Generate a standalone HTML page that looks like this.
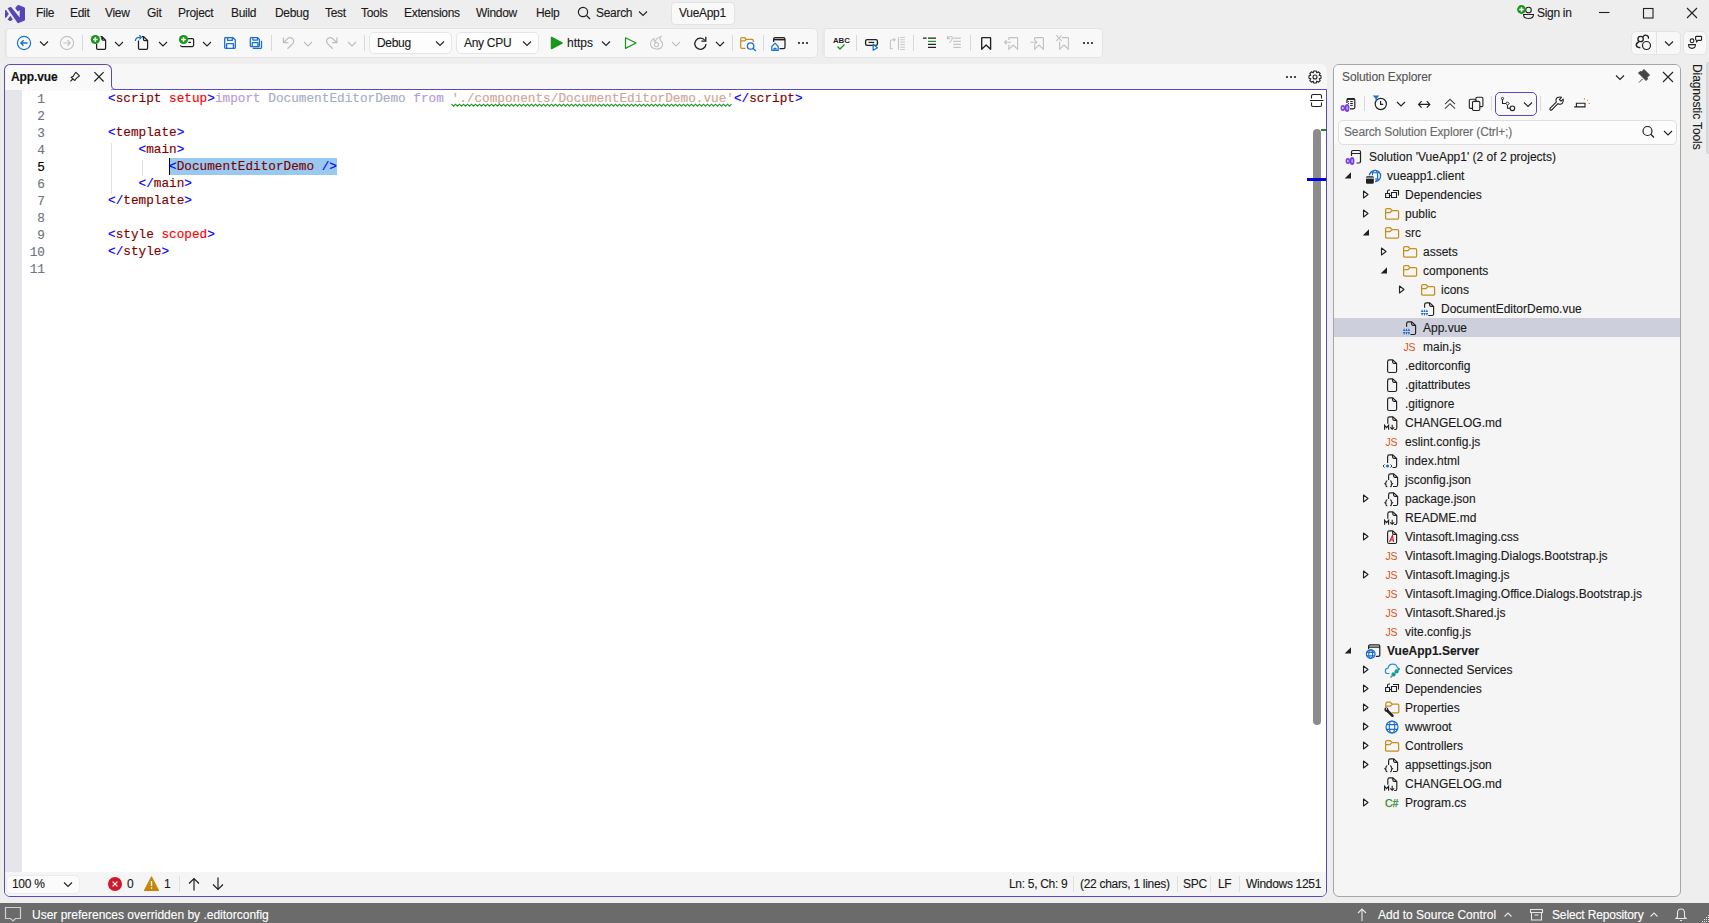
<!DOCTYPE html>
<html><head><meta charset="utf-8">
<style>
*{box-sizing:border-box;margin:0;padding:0}
html,body{width:1709px;height:923px;overflow:hidden;background:#eeeeee;font-family:"Liberation Sans",sans-serif;font-size:12px;color:#1a1a1a}
.a{position:absolute}
.t{position:absolute;white-space:nowrap;line-height:14px;letter-spacing:-0.3px;-webkit-text-stroke:0.12px}
.menu .t{top:6px}
.tb{position:absolute;background:#f8f8f8;border:1px solid #e4e4e4;border-radius:5px}
.cb{position:absolute;background:#fdfdfd;border:1px solid #e6e6e6;border-radius:5px}
.sep{position:absolute;width:1px;background:#d9d9d9}
svg{position:absolute;overflow:visible}
.code{position:absolute;left:108px;top:90px;font-family:"Liberation Mono",monospace;font-size:12.72px;line-height:17px;white-space:pre;color:#000;-webkit-text-stroke:0.15px}
.ln{position:absolute;left:22px;top:90.5px;width:23px;text-align:right;font-family:"Liberation Mono",monospace;font-size:12.72px;line-height:17px;color:#6e7681;white-space:pre;-webkit-text-stroke:0.15px}
.se .t{line-height:19px;letter-spacing:0;margin-top:1px}
.tag{color:#0000ff}.nm{color:#800000}.at{color:#ff0000}.i1{color:#b89ad6}.i2{color:#a4adc6}.i3{color:#d1a595}
</style></head><body>
<!-- title bar / menu -->
<div class="menu">
<div class="t" style="left:36px">File</div>
<div class="t" style="left:70px">Edit</div>
<div class="t" style="left:105px">View</div>
<div class="t" style="left:147px">Git</div>
<div class="t" style="left:178px">Project</div>
<div class="t" style="left:231px">Build</div>
<div class="t" style="left:275px">Debug</div>
<div class="t" style="left:325px">Test</div>
<div class="t" style="left:361px">Tools</div>
<div class="t" style="left:404px">Extensions</div>
<div class="t" style="left:476px">Window</div>
<div class="t" style="left:536px">Help</div>
<div class="t" style="left:596px">Search</div>
<div class="a" style="left:671px;top:2px;width:64px;height:23px;background:#f9f9f9;border:1px solid #e2e2e2;border-radius:4px"></div>
<div class="t" style="left:679px">VueApp1</div>
<div class="t" style="left:1537px">Sign in</div>
</div>

<!-- toolbars -->
<div class="tb" style="left:4px;top:28px;width:814px;height:30px;border-left:3px solid #e8e8e8"></div>
<div class="tb" style="left:822px;top:28px;width:281px;height:30px;border-left:3px solid #e8e8e8"></div>
<div class="cb" style="left:369px;top:32px;width:83px;height:22px"></div>
<div class="cb" style="left:456px;top:32px;width:83px;height:22px"></div>
<div class="t" style="left:377px;top:36px">Debug</div>
<div class="t" style="left:464px;top:36px">Any CPU</div>
<div class="t" style="left:567px;top:36px;letter-spacing:0">https</div>
<div class="sep" style="left:82px;top:35px;height:16px"></div>
<div class="sep" style="left:271px;top:35px;height:16px"></div>
<div class="sep" style="left:364px;top:35px;height:16px"></div>
<div class="sep" style="left:732px;top:35px;height:16px"></div>
<div class="sep" style="left:763px;top:35px;height:16px"></div>
<div class="sep" style="left:856px;top:35px;height:16px"></div>
<div class="sep" style="left:913px;top:35px;height:16px"></div>
<div class="sep" style="left:970px;top:35px;height:16px"></div>
<div class="tb" style="left:1631px;top:31px;width:50px;height:24px"></div>
<div class="sep" style="left:1656px;top:32px;height:22px;background:#e4e4e4"></div>
<div class="tb" style="left:1683px;top:31px;width:24px;height:24px"></div>

<!-- document well -->
<div class="a" style="left:4px;top:64px;width:1323px;height:833px;background:#f7f7f7;border-radius:6px"></div>
<div class="a" style="left:4px;top:89px;width:1323px;height:808px;background:#fff;border:1px solid #574ab9;border-radius:0 0 6px 6px"></div>
<div class="a" style="left:4px;top:64px;width:108px;height:26px;background:#f9f9f9;border:1px solid #574ab9;border-bottom:none;border-radius:6px 6px 0 0"></div>
<div class="a" style="left:5px;top:89px;width:106px;height:2px;background:#f9f9f9"></div>
<div class="t" style="left:11px;top:70px;font-weight:bold;color:#111;letter-spacing:-0.1px">App.vue</div>
<div class="a" style="left:5px;top:90px;width:17px;height:782px;background:#e6e6ea"></div>
<div class="a" style="left:5px;top:872px;width:1321px;height:24px;background:#f5f5f5;border-radius:0 0 5px 5px"></div>
<div class="cb" style="left:6px;top:875px;width:74px;height:19px;background:#fbfbfb;border-color:#ececec"></div>
<div class="t" style="left:12px;top:877px">100 %</div>
<div class="t" style="left:127px;top:877px">0</div>
<div class="t" style="left:164px;top:877px">1</div>
<div class="sep" style="left:179px;top:876px;height:16px;background:#e0e0e0"></div>
<div class="t" style="left:1009px;top:877px">Ln: 5, Ch: 9</div>
<div class="sep" style="left:1073px;top:876px;height:16px;background:#e0e0e0"></div>
<div class="t" style="left:1080px;top:877px">(22 chars, 1 lines)</div>
<div class="sep" style="left:1177px;top:876px;height:16px;background:#e0e0e0"></div>
<div class="t" style="left:1183px;top:877px">SPC</div>
<div class="sep" style="left:1210px;top:876px;height:16px;background:#e0e0e0"></div>
<div class="t" style="left:1218px;top:877px">LF</div>
<div class="sep" style="left:1239px;top:876px;height:16px;background:#e0e0e0"></div>
<div class="t" style="left:1246px;top:877px">Windows 1251</div>

<!-- editor content -->
<div class="a" style="left:111px;top:143px;width:1px;height:51px;background:#e0e0e0"></div>
<div class="a" style="left:142px;top:160px;width:1px;height:16px;background:#e0e0e0"></div>
<div class="a" style="left:169px;top:158px;width:168px;height:17px;background:#99c9ef"></div>
<div class="a" style="left:169px;top:158px;width:1px;height:17px;background:#000"></div>
<div class="ln">1
2
3
4
<span style="color:#000">5</span>
6
7
8
9
10
11</div>
<div class="code"><span class="tag">&lt;</span><span class="nm">script</span> <span class="at">setup</span><span class="tag">&gt;</span><span class="i1">import</span> <span class="i2">DocumentEditorDemo</span> <span class="i1">from</span> <span class="i3">'./components/DocumentEditorDemo.vue'</span><span class="tag">&lt;/</span><span class="nm">script</span><span class="tag">&gt;</span>

<span class="tag">&lt;</span><span class="nm">template</span><span class="tag">&gt;</span>
    <span class="tag">&lt;</span><span class="nm">main</span><span class="tag">&gt;</span>
        <span class="tag">&lt;</span><span class="nm">DocumentEditorDemo</span> <span class="tag">/&gt;</span>
    <span class="tag">&lt;/</span><span class="nm">main</span><span class="tag">&gt;</span>
<span class="tag">&lt;/</span><span class="nm">template</span><span class="tag">&gt;</span>

<span class="tag">&lt;</span><span class="nm">style</span> <span class="at">scoped</span><span class="tag">&gt;</span>
<span class="tag">&lt;/</span><span class="nm">style</span><span class="tag">&gt;</span>
</div>
<!-- scrollbar -->
<div class="a" style="left:1313px;top:129px;width:8px;height:596px;background:#8c8c8c;border-radius:4px"></div>
<div class="a" style="left:1321px;top:129px;width:5px;height:2px;background:#1e8a1e"></div>
<div class="a" style="left:1307px;top:178px;width:19px;height:3px;background:#0000d8"></div>

<!-- Solution explorer -->
<div class="a" style="left:1333px;top:64px;width:348px;height:833px;background:#f5f5f5;border:1px solid #a6a6a6;border-radius:6px"></div>
<div class="a" style="left:1334px;top:65px;width:346px;height:79px;background:#f9f9f9;border-radius:5px 5px 0 0"></div>
<div class="t" style="left:1342px;top:70px;color:#555;letter-spacing:-0.1px">Solution Explorer</div>
<div class="cb" style="left:1338px;top:120px;width:339px;height:25px;background:#fcfcfc;border-color:#dfdfdf"></div>
<div class="t" style="left:1344px;top:125px;color:#6a6a6a;letter-spacing:-0.15px">Search Solution Explorer (Ctrl+;)</div>
<div class="a" style="left:1495px;top:92px;width:42px;height:24px;border:1.5px solid #574ab9;border-radius:5px;background:#f9f9f9"></div>
<div class="sep" style="left:1364px;top:96px;height:15px"></div>
<div class="sep" style="left:1491px;top:96px;height:15px"></div>
<div class="sep" style="left:1540px;top:96px;height:15px"></div>
<div class="a" style="left:1334px;top:318px;width:346px;height:19px;background:#cdcfdc"></div>
<div class="se">
<div class="t" style="left:1369px;top:147px">Solution 'VueApp1' (2 of 2 projects)</div>
<div class="t" style="left:1387px;top:166px">vueapp1.client</div>
<div class="t" style="left:1405px;top:185px">Dependencies</div>
<div class="t" style="left:1405px;top:204px">public</div>
<div class="t" style="left:1405px;top:223px">src</div>
<div class="t" style="left:1423px;top:242px">assets</div>
<div class="t" style="left:1423px;top:261px">components</div>
<div class="t" style="left:1441px;top:280px">icons</div>
<div class="t" style="left:1441px;top:299px">DocumentEditorDemo.vue</div>
<div class="t" style="left:1423px;top:318px">App.vue</div>
<div class="t" style="left:1423px;top:337px">main.js</div>
<div class="t" style="left:1405px;top:356px">.editorconfig</div>
<div class="t" style="left:1405px;top:375px">.gitattributes</div>
<div class="t" style="left:1405px;top:394px">.gitignore</div>
<div class="t" style="left:1405px;top:413px">CHANGELOG.md</div>
<div class="t" style="left:1405px;top:432px">eslint.config.js</div>
<div class="t" style="left:1405px;top:451px">index.html</div>
<div class="t" style="left:1405px;top:470px">jsconfig.json</div>
<div class="t" style="left:1405px;top:489px">package.json</div>
<div class="t" style="left:1405px;top:508px">README.md</div>
<div class="t" style="left:1405px;top:527px">Vintasoft.Imaging.css</div>
<div class="t" style="left:1405px;top:546px">Vintasoft.Imaging.Dialogs.Bootstrap.js</div>
<div class="t" style="left:1405px;top:565px">Vintasoft.Imaging.js</div>
<div class="t" style="left:1405px;top:584px">Vintasoft.Imaging.Office.Dialogs.Bootstrap.js</div>
<div class="t" style="left:1405px;top:603px">Vintasoft.Shared.js</div>
<div class="t" style="left:1405px;top:622px">vite.config.js</div>
<div class="t" style="left:1387px;top:641px;font-weight:bold">VueApp1.Server</div>
<div class="t" style="left:1405px;top:660px">Connected Services</div>
<div class="t" style="left:1405px;top:679px">Dependencies</div>
<div class="t" style="left:1405px;top:698px">Properties</div>
<div class="t" style="left:1405px;top:717px">wwwroot</div>
<div class="t" style="left:1405px;top:736px">Controllers</div>
<div class="t" style="left:1405px;top:755px">appsettings.json</div>
<div class="t" style="left:1405px;top:774px">CHANGELOG.md</div>
<div class="t" style="left:1405px;top:793px">Program.cs</div>
</div>

<!-- Diagnostic tools vertical tab -->
<div class="a" style="left:1706px;top:62px;width:3px;height:92px;background:#d8d8d8;border-radius:2px 0 0 2px"></div>
<div class="t" style="left:1689.5px;top:64px;transform-origin:0 0;transform:rotate(90deg) translate(0,-14px);color:#1a1a1a;letter-spacing:-0.1px">Diagnostic Tools</div>

<!-- status bar -->
<div class="a" style="left:0;top:903px;width:1709px;height:20px;background:#6b6b6b"></div>
<div class="t" style="left:32px;top:907.7px;color:#fff;letter-spacing:0">User preferences overridden by .editorconfig</div>
<div class="t" style="left:1378px;top:907.7px;color:#fff;letter-spacing:0">Add to Source Control</div>
<div class="t" style="left:1552px;top:907.7px;color:#fff;letter-spacing:-0.15px">Select Repository</div>

<svg width="1709" height="923" style="left:0;top:0" viewBox="0 0 1709 923"><path fill="#5647b6" d="M5,10.3 L5,17.6 Q5.6,18.4 6.3,17.6 L8.8,14 L6.3,10.2 Q5.6,9.6 5,10.3 Z M7.6,19.4 L10.4,15.8 L12.8,19.5 L10.8,20.9 Q10.3,21.1 9.8,20.9 Z M7.5,8.3 L10.3,7 Q10.9,6.8 11.3,7.3 L19.7,17.6 L19.7,10.2 L17.7,11.6 L15.1,8.1 L17.6,5.2 Q18.1,4.8 18.7,5 L24.2,7.3 Q25,7.8 25,8.6 L25,19.4 Q25,20.2 24.2,20.7 L18.6,23.1 Q17.9,23.3 17.4,22.7 Z"/>
<circle cx="583" cy="12" r="4.6" fill="none" stroke="#212121" stroke-width="1.2"/><path d="M586.4,15.4 L590,19" stroke="#212121" stroke-width="1.3"/>
<path d="M639,11.5 L643,15.5 L647,11.5" fill="none" stroke="#212121" stroke-width="1.1"/>
<circle cx="1528.5" cy="10" r="2.8" fill="none" stroke="#212121" stroke-width="1.1"/><path d="M1523.5,14.5 H1533.5 Q1533.5,18.5 1528.5,18.5 Q1523.5,18.5 1523.5,14.5 Z" fill="none" stroke="#212121" stroke-width="1.1"/>
<circle cx="1521.5" cy="9.5" r="4.4" fill="#1a961a"/>
<path d="M1519.2,9.5 H1523.8 M1521.5,7.2 V11.8" stroke="#fff" stroke-width="1.5"/>
<path d="M1599,12.5 H1609.5" stroke="#212121" stroke-width="1.1"/>
<rect x="1643.5" y="8.5" width="9.5" height="9.5" fill="none" stroke="#212121" stroke-width="1.1"/>
<path d="M1687,8 L1697,18 M1697,8 L1687,18" stroke="#212121" stroke-width="1.1"/>
<circle cx="24" cy="43" r="6.6" fill="none" stroke="#1b6fd1" stroke-width="1.2"/><path d="M27.6,43 H20.8 M23.6,40.2 L20.8,43 L23.6,45.8" fill="none" stroke="#1b6fd1" stroke-width="1.3"/>
<path d="M40,41.5 L44,45.5 L48,41.5" fill="none" stroke="#212121" stroke-width="1.1"/>
<circle cx="67" cy="43" r="6.6" fill="none" stroke="#c2c2c2" stroke-width="1.1"/><path d="M63.4,43 H70.2 M67.4,40.2 L70.2,43 L67.4,45.8" fill="none" stroke="#c2c2c2" stroke-width="1.2"/>
<path d="M96.6,44 V48.3 Q96.6,49.4 97.7,49.4 H104.5 Q105.6,49.4 105.6,48.3 V40.2 L102,36.6 H100.5 M101.9,36.8 V39 Q101.9,40.1 103,40.1 H105.4" fill="none" stroke="#212121" stroke-width="1.25" stroke-linejoin="round"/>
<circle cx="95.3" cy="39.5" r="4.6" fill="#1a961a"/>
<path d="M93.0,39.5 H97.6 M95.3,37.2 V41.8" stroke="#fff" stroke-width="1.5"/>
<path d="M115,42.0 L119,46.0 L123,42.0" fill="none" stroke="#212121" stroke-width="1.1"/>
<path d="M138.5,40.5 V48.3 Q138.5,49.4 139.6,49.4 H146.5 Q147.6,49.4 147.6,48.3 V40.5 L143.7,36.6 H142 M143.5,36.8 V39.4 Q143.5,40.5 144.6,40.5 H147.4" fill="none" stroke="#212121" stroke-width="1.25" stroke-linejoin="round"/><path d="M135.4,41 Q135.4,37.3 139.5,37.3 H141 M139.4,35.2 L141.4,37.3 L139.4,39.4" fill="none" stroke="#1b6fd1" stroke-width="1.2"/>
<path d="M159,42.0 L163,46.0 L167,42.0" fill="none" stroke="#212121" stroke-width="1.1"/>
<path d="M180.6,45.3 Q180.6,46.5 181.8,46.5 H192.4 Q193.6,46.5 193.6,45.3 V39.7 Q193.6,38.5 192.4,38.5 H188 M188.4,42.3 H191" fill="none" stroke="#212121" stroke-width="1.25"/>
<circle cx="183.5" cy="39.5" r="4.6" fill="#1a961a"/>
<path d="M181.2,39.5 H185.8 M183.5,37.2 V41.8" stroke="#fff" stroke-width="1.5"/>
<path d="M203,42.0 L207,46.0 L211,42.0" fill="none" stroke="#212121" stroke-width="1.1"/>
<path d="M225.4,37.7 H233 L235.3,40 V47.6 Q235.3,48.3 234.6,48.3 H225.4 Q224.7,48.3 224.7,47.6 V38.4 Q224.7,37.7 225.4,37.7 Z M227.6,37.8 V40.4 H232.3 V37.8 M226.6,48.2 V44.3 Q226.6,43.7 227.2,43.7 H232.8 Q233.4,43.7 233.4,44.3 V48.2" fill="none" stroke="#1b6fd1" stroke-width="1.3" stroke-linejoin="round"/>
<path d="M251,37.7 H257.6 L259.4,39.5 V45.8 Q259.4,46.5 258.7,46.5 H251 Q250.3,46.5 250.3,45.8 V38.4 Q250.3,37.7 251,37.7 Z M252.9,37.8 V40 H257.4 V37.8 M252.2,46.4 V43.1 Q252.2,42.5 252.8,42.5 H257.3 Q257.9,42.5 257.9,43.1 V46.4 M252.8,48.3 H260.6 Q261.5,48.3 261.5,47.4 V40.7" fill="none" stroke="#1b6fd1" stroke-width="1.25" stroke-linejoin="round"/>
<path d="M283.4,37.4 V42.6 H288.4 M283.9,42.2 L287.2,39 Q289.9,36.7 292.5,38.6 Q294.9,40.9 292.7,43.7 L287.5,48.7" fill="none" stroke="#bdbdbd" stroke-width="1.2"/>
<path d="M304,42.0 L308,46.0 L312,42.0" fill="none" stroke="#bdbdbd" stroke-width="1.1"/>
<path d="M 336.9,37.4 V 42.6 H 331.9 M 336.4,42.2 L 333.1,39.0 Q 330.4,36.7 327.8,38.6 Q 325.4,40.9 327.6,43.7 L 332.8,48.7" fill="none" stroke="#bdbdbd" stroke-width="1.2"/>
<path d="M348,42.0 L352,46.0 L356,42.0" fill="none" stroke="#bdbdbd" stroke-width="1.1"/>
<path d="M436,41.5 L440,45.5 L444,41.5" fill="none" stroke="#212121" stroke-width="1.1"/>
<path d="M523,41.5 L527,45.5 L531,41.5" fill="none" stroke="#212121" stroke-width="1.1"/>
<path d="M551.5,37.5 L562,43 L551.5,48.5 Z" fill="#1a961a" stroke="#1a961a" stroke-width="1.5" stroke-linejoin="round"/>
<path d="M602,41.5 L606,45.5 L610,41.5" fill="none" stroke="#212121" stroke-width="1.1"/>
<path d="M625.5,37.8 L636,43 L625.5,48.4 Z" fill="none" stroke="#1a961a" stroke-width="1.2" stroke-linejoin="round"/>
<path d="M656,49 Q650,48 650.5,43 Q651,40 654,38.5 Q653.5,41 655,42 Q656,38 661,36.5 Q659,39 661,41 Q664,44 661.5,47.5 Q659.5,49.5 656,49 Z M656.5,46.8 A2.2,2.2 0 1 0 656.5,42.4 A2.2,2.2 0 1 0 656.5,46.8" fill="none" stroke="#c2c2c2" stroke-width="1.1"/>
<path d="M672,42.0 L676,46.0 L680,42.0" fill="none" stroke="#c2c2c2" stroke-width="1.1"/>
<path d="M705,40.5 A5.6,5.6 0 1 0 706,44" fill="none" stroke="#212121" stroke-width="1.3"/><path d="M705.8,36.8 V41.2 H701.4" fill="none" stroke="#212121" stroke-width="1.3"/>
<path d="M716,42.0 L720,46.0 L724,42.0" fill="none" stroke="#212121" stroke-width="1.1"/>
<path d="M745.5,48.4 H742 Q740.7,48.4 740.7,47.1 V38.8 Q740.7,37.5 742,37.5 H744.6 L746.4,39.4 H752 Q753.3,39.4 753.3,40.7 V42 M740.7,40.9 H744.6 L746.4,39.4" fill="none" stroke="#c4901b" stroke-width="1.25" stroke-linejoin="round"/><circle cx="750.6" cy="46" r="3.2" fill="#f8f8f8" stroke="#1b6fd1" stroke-width="1.3"/><path d="M752.9,48.3 L755.8,51" stroke="#1b6fd1" stroke-width="1.4"/>
<path d="M773.6,42 V39.2 Q773.6,37.6 775.2,37.6 H783.4 Q785,37.6 785,39.2 V47 Q785,48.6 783.4,48.6 H779.5" fill="none" stroke="#212121" stroke-width="1.25"/><path d="M773.6,39.6 H785" stroke="#212121" stroke-width="1.6"/><path d="M771.8,50.4 V46.5 L775,43.2 L778.2,46.5 V50.4 Z M774,50.4 V48.4 H776 V50.4" fill="#f8f8f8" stroke="#1b6fd1" stroke-width="1.2" stroke-linejoin="round"/>
<circle cx="799" cy="43" r="1.1" fill="#212121"/>
<circle cx="803" cy="43" r="1.1" fill="#212121"/>
<circle cx="807" cy="43" r="1.1" fill="#212121"/>
<text x="841.4" y="42.6" text-anchor="middle" font-family="Liberation Sans" font-weight="bold" font-size="7.8" fill="#212121">ABC</text><path d="M837.5,46.5 L840,49 L844.5,44.5" fill="none" stroke="#1a961a" stroke-width="1.4"/>
<rect x="865.6" y="39.6" width="11.8" height="5.8" rx="1.6" fill="none" stroke="#212121" stroke-width="1.35"/><path d="M868.6,42.4 H874.2" stroke="#212121" stroke-width="1.2"/><path d="M873.2,44.2 V50.2 L877.4,47.8 Z" fill="#fff" stroke="#1b6fd1" stroke-width="1.3" stroke-linejoin="round"/>
<path d="M893,48.8 H890.4 V41.6 M890.4,41.6 Q890.4,39.8 892.6,39.8 H895 M893.6,38.2 L895.2,39.8 L893.6,41.4" fill="none" stroke="#c4c4c4" stroke-width="1.1"/><path d="M898.5,37.2 V49.8" stroke="#c4c4c4" stroke-width="1.1"/><path d="M900.2,37.4 H905 M900.2,39.8 H905 M900.2,42.2 H905 M900.2,44.7 H905 M900.2,47.2 H905 M900.2,49.6 H905" stroke="#c4c4c4" stroke-width="0.9"/>
<path d="M923,38.1 H926.6 M928,38.1 H936 M928,44.4 H936 M928,47.4 H936" stroke="#212121" stroke-width="1.2"/><path d="M928,41.4 H936" stroke="#1a961a" stroke-width="1.2"/>
<path d="M953.3,38.1 H960.8 M953.3,41.4 H960.8 M953.3,44.4 H960.8 M953.3,47.4 H960.8" stroke="#c4c4c4" stroke-width="1.1"/><path d="M947.4,35.8 V38.6 H950 M947.8,38.2 Q950,35.4 952,37 Q953,38.6 951,41 L949.4,43" fill="none" stroke="#c4c4c4" stroke-width="1.05"/>
<path d="M981.7,49.2 V38.2 Q981.7,37.6 982.3,37.6 H990 Q990.6,37.6 990.6,38.2 V49.2 L986.15,45 Z" fill="none" stroke="#212121" stroke-width="1.35" stroke-linejoin="round"/>
<path d="M1008.8,40 V38.2 Q1008.8,37.6 1009.4,37.6 H1017.0 Q1017.5999999999999,37.6 1017.5999999999999,38.2 V49.2 L1013.1999999999999,45 L1008.8,49.2 V44.6 M1004.5,42.2 H1011 M1006.6,40.1 L1004.5,42.2 L1006.6,44.3" fill="none" stroke="#c0c0c0" stroke-width="1.1"/>
<path d="M1034.6,40 V38.2 Q1034.6,37.6 1035.1999999999998,37.6 H1042.8 Q1043.3999999999999,37.6 1043.3999999999999,38.2 V49.2 L1039.0,45 L1034.6,49.2 V44.6 M1030.3,42.2 H1036.8 M1034.7,40.1 L1036.8,42.2 L1034.7,44.3" fill="none" stroke="#c0c0c0" stroke-width="1.1"/>
<path d="M1059.6,41.5 V49.2 L1064,45 L1068.4,49.2 V38.2 Q1068.4,37.6 1067.8,37.6 H1062 M1056.3,35.4 L1061.7,40.8 M1061.7,35.4 L1056.3,40.8" fill="none" stroke="#c0c0c0" stroke-width="1.1"/>
<circle cx="1084" cy="43" r="1.1" fill="#212121"/>
<circle cx="1088" cy="43" r="1.1" fill="#212121"/>
<circle cx="1092" cy="43" r="1.1" fill="#212121"/>
<circle cx="1640.6" cy="39" r="2.7" fill="none" stroke="#212121" stroke-width="1.3"/><path d="M1643.1,37 A2.7,2.7 0 0 1 1648.3,38.8" fill="none" stroke="#212121" stroke-width="1.2"/><path d="M1638.8,42 Q1636.3,42.8 1636.3,45.2 Q1636.5,47.3 1640.3,47.8" fill="none" stroke="#212121" stroke-width="1.5"/><circle cx="1646.5" cy="45.5" r="4" fill="#f8f8f8" stroke="#212121" stroke-width="1.2"/>
<path d="M1665,41.5 L1669,45.5 L1673,41.5" fill="none" stroke="#212121" stroke-width="1.1"/>
<circle cx="1692" cy="40.8" r="1.9" fill="none" stroke="#212121" stroke-width="1.1"/><path d="M1688.6,44.6 H1695.4 Q1695.6,48.4 1692,48.4 Q1688.4,48.4 1688.6,44.6 Z" fill="none" stroke="#212121" stroke-width="1.1"/><path d="M1696.4,36.4 H1700.8 Q1701.6,36.4 1701.6,37.2 V39.6 Q1701.6,40.4 1700.8,40.4 H1698.2 L1696.6,41.8 V40.2 Q1695.6,40 1695.6,39.4 V37.2 Q1695.6,36.4 1696.4,36.4 Z" fill="none" stroke="#212121" stroke-width="1.1"/>
<path d="M70.4,81.4 L72.8,79 M71.2,77.3 L73.3,76.2 L74.5,74 L75.9,72.3 L79.5,75.9 L77.7,77.2 L76.2,78.5 L74.9,80.5 Z" fill="none" stroke="#212121" stroke-width="1.1" stroke-linejoin="round"/>
<path d="M94.4,72.2 L103.6,81.5 M103.6,72.2 L94.4,81.5" stroke="#212121" stroke-width="1.2"/>
<circle cx="1287" cy="77" r="1.1" fill="#212121"/>
<circle cx="1291" cy="77" r="1.1" fill="#212121"/>
<circle cx="1295" cy="77" r="1.1" fill="#212121"/>
<rect x="111" y="83" width="8" height="6.4" fill="#f7f7f7"/><path d="M111.5,82 V85 Q111.5,89.5 116,89.5 H120" fill="none" stroke="#574ab9" stroke-width="1"/>
<g transform="translate(1315,77)"><path d="M-1.2,-6 H1.2 L1.8,-4.2 L3.5,-5.2 L5.2,-3.5 L4.2,-1.8 L6,-1.2 V1.2 L4.2,1.8 L5.2,3.5 L3.5,5.2 L1.8,4.2 L1.2,6 H-1.2 L-1.8,4.2 L-3.5,5.2 L-5.2,3.5 L-4.2,1.8 L-6,1.2 V-1.2 L-4.2,-1.8 L-5.2,-3.5 L-3.5,-5.2 L-1.8,-4.2 Z" fill="none" stroke="#212121" stroke-width="1.1" stroke-linejoin="round"/><circle r="2" fill="none" stroke="#212121" stroke-width="1.1"/></g>
<path d="M1311.5,98.5 V96 Q1311.5,94.5 1313,94.5 H1320 Q1321.5,94.5 1321.5,96 V98.5 M1311.5,102.5 V105 Q1311.5,106.5 1313,106.5 H1320 Q1321.5,106.5 1321.5,105 V102.5 M1310,100.5 H1323.5" fill="none" stroke="#212121" stroke-width="1.1"/>
<polyline points="451.5,104.2 453.5,106.2 455.5,104.2 457.5,106.2 459.5,104.2 461.5,106.2 463.5,104.2 465.5,106.2 467.5,104.2 469.5,106.2 471.5,104.2 473.5,106.2 475.5,104.2 477.5,106.2 479.5,104.2 481.5,106.2 483.5,104.2 485.5,106.2 487.5,104.2 489.5,106.2 491.5,104.2 493.5,106.2 495.5,104.2 497.5,106.2 499.5,104.2 501.5,106.2 503.5,104.2 505.5,106.2 507.5,104.2 509.5,106.2 511.5,104.2 513.5,106.2 515.5,104.2 517.5,106.2 519.5,104.2 521.5,106.2 523.5,104.2 525.5,106.2 527.5,104.2 529.5,106.2 531.5,104.2 533.5,106.2 535.5,104.2 537.5,106.2 539.5,104.2 541.5,106.2 543.5,104.2 545.5,106.2 547.5,104.2 549.5,106.2 551.5,104.2 553.5,106.2 555.5,104.2 557.5,106.2 559.5,104.2 561.5,106.2 563.5,104.2 565.5,106.2 567.5,104.2 569.5,106.2 571.5,104.2 573.5,106.2 575.5,104.2 577.5,106.2 579.5,104.2 581.5,106.2 583.5,104.2 585.5,106.2 587.5,104.2 589.5,106.2 591.5,104.2 593.5,106.2 595.5,104.2 597.5,106.2 599.5,104.2 601.5,106.2 603.5,104.2 605.5,106.2 607.5,104.2 609.5,106.2 611.5,104.2 613.5,106.2 615.5,104.2 617.5,106.2 619.5,104.2 621.5,106.2 623.5,104.2 625.5,106.2 627.5,104.2 629.5,106.2 631.5,104.2 633.5,106.2 635.5,104.2 637.5,106.2 639.5,104.2 641.5,106.2 643.5,104.2 645.5,106.2 647.5,104.2 649.5,106.2 651.5,104.2 653.5,106.2 655.5,104.2 657.5,106.2 659.5,104.2 661.5,106.2 663.5,104.2 665.5,106.2 667.5,104.2 669.5,106.2 671.5,104.2 673.5,106.2 675.5,104.2 677.5,106.2 679.5,104.2 681.5,106.2 683.5,104.2 685.5,106.2 687.5,104.2 689.5,106.2 691.5,104.2 693.5,106.2 695.5,104.2 697.5,106.2 699.5,104.2 701.5,106.2 703.5,104.2 705.5,106.2 707.5,104.2 709.5,106.2 711.5,104.2 713.5,106.2 715.5,104.2 717.5,106.2 719.5,104.2 721.5,106.2 723.5,104.2 725.5,106.2 727.5,104.2 729.5,106.2 731.5,104.2" fill="none" stroke="#1f8f1f" stroke-width="1.1"/>
<path d="M64,882.5 L68,886.5 L72,882.5" fill="none" stroke="#212121" stroke-width="1.1"/>
<circle cx="115" cy="884" r="7" fill="#d0182b"/><path d="M112.6,881.6 L117.4,886.4 M117.4,881.6 L112.6,886.4" stroke="#fff" stroke-width="1.2"/>
<path d="M151.5,877 L158.5,890.5 H144.5 Z" fill="#c5870b" stroke="#c5870b" stroke-width="1.2" stroke-linejoin="round"/><path d="M151.5,881 V886" stroke="#fff" stroke-width="1.4"/><circle cx="151.5" cy="888" r="0.8" fill="#fff"/>
<path d="M194,890.5 V878.5 M189,883.5 L194,878.5 L199,883.5" fill="none" stroke="#212121" stroke-width="1.2"/>
<path d="M218,877.5 V889.5 M213,884.5 L218,889.5 L223,884.5" fill="none" stroke="#212121" stroke-width="1.2"/>
<path d="M5.5,907.5 H20.5 V918.5 H15.5 L13,921 L10.5,918.5 H5.5 Z" fill="none" stroke="#d0d0d0" stroke-width="1.2"/>
<path d="M1362,921 V909 M1358,913 L1362,909 L1366,913" fill="none" stroke="#e8e8e8" stroke-width="1.1"/>
<path d="M1504.5,916.5 L1508,913 L1511.5,916.5" fill="none" stroke="#e8e8e8" stroke-width="1.1"/>
<path d="M1650.5,916.5 L1654,913 L1657.5,916.5" fill="none" stroke="#e8e8e8" stroke-width="1.1"/>
<path d="M1530.5,909.5 H1542.5 V912.5 H1530.5 Z M1531.5,912.5 V920 H1541.5 V912.5 M1534.5,915 H1538.5" fill="none" stroke="#e8e8e8" stroke-width="1.1"/>
<path d="M1677.5,917 V913 Q1677.5,909 1681,909 Q1684.5,909 1684.5,913 V917 L1686,918.5 H1676 Z M1680,920.5 H1682" fill="none" stroke="#e8e8e8" stroke-width="1.1"/>
<rect x="1708" y="915" width="1" height="1" fill="#e6e6e6"/>
<rect x="1708" y="917" width="1" height="1" fill="#e6e6e6"/>
<rect x="1706" y="917" width="1" height="1" fill="#e6e6e6"/>
<rect x="1708" y="919" width="1" height="1" fill="#e6e6e6"/>
<rect x="1706" y="919" width="1" height="1" fill="#e6e6e6"/>
<rect x="1704" y="919" width="1" height="1" fill="#e6e6e6"/>
<rect x="1708" y="921" width="1" height="1" fill="#e6e6e6"/>
<rect x="1706" y="921" width="1" height="1" fill="#e6e6e6"/>
<rect x="1704" y="921" width="1" height="1" fill="#e6e6e6"/>
<rect x="1702" y="921" width="1" height="1" fill="#e6e6e6"/>
<path d="M1616,75.5 L1620,79.5 L1624,75.5" fill="none" stroke="#212121" stroke-width="1.1"/>
<path d="M1639,82.5 L1642.5,79 M1641,75.5 L1646,80.5 L1647.5,79 L1647,77.5 L1649.5,75 L1644,69.5 L1641.5,72 L1640,71.5 L1638.5,73 Z" fill="#444" stroke="#444" stroke-width="1" stroke-linejoin="round"/>
<path d="M1663,72 L1673,82 M1673,72 L1663,82" stroke="#212121" stroke-width="1.1"/>
<path d="M1347,103 V99.8 Q1347,98.6 1348.2,98.6 H1353.6 Q1354.8,98.6 1354.8,99.8 V107.6 Q1354.8,108.8 1353.6,108.8 H1350" fill="none" stroke="#212121" stroke-width="1.2"/><path d="M1347,99.2 H1354.6" stroke="#212121" stroke-width="1.4"/><path d="M1350.2,101.6 H1352.8 M1350.2,103.5 H1352.8 M1350.2,105.4 H1352.8" stroke="#212121" stroke-width="1"/><circle cx="1348.4" cy="101.6" r="0.6" fill="#212121"/><circle cx="1348.4" cy="103.5" r="0.6" fill="#212121"/>
<ellipse cx="1342.9" cy="108" rx="1.5" ry="2.2" fill="none" stroke="#7b3fe4" stroke-width="1.7"/><ellipse cx="1347.1" cy="108" rx="1.4" ry="3.0" fill="none" stroke="#7b3fe4" stroke-width="1.9"/>
<circle cx="1380.8" cy="104" r="5.6" fill="none" stroke="#212121" stroke-width="1.2"/><path d="M1380.6,101 V104.4 H1383.2" fill="none" stroke="#212121" stroke-width="1.2"/><path d="M1372.6,95.6 H1379.2 L1376.9,98.6 V101.6 L1375.5,100.6 V98.6 Z" fill="#1b6fd1"/>
<path d="M1397,102.0 L1401,106.0 L1405,102.0" fill="none" stroke="#212121" stroke-width="1.1"/>
<path d="M1418.6,104.4 H1429.8 M1421.6,101.2 L1418.6,104.4 L1421.6,107.6 M1426.8,101.2 L1429.8,104.4 L1426.8,107.6" fill="none" stroke="#212121" stroke-width="1.2"/>
<path d="M1445,104.2 L1450,99.3 L1455,104.2 M1445,108.6 L1450,103.7 L1455,108.6" fill="none" stroke="#444" stroke-width="1.1"/>
<rect x="1475.9" y="97.3" width="7" height="9.3" rx="1.2" fill="#f9f9f9" stroke="#212121" stroke-width="1.1"/><rect x="1469.3" y="99.3" width="6.6" height="9.1" rx="1.2" fill="#f9f9f9" stroke="#212121" stroke-width="1.1"/><rect x="1472.5" y="101.4" width="7.3" height="9.1" rx="1.2" fill="#f9f9f9" stroke="#212121" stroke-width="1.1"/>
<circle cx="1502.5" cy="98.5" r="1.1" fill="none" stroke="#212121" stroke-width="1"/><path d="M1502.5,99.6 V103.5 H1506 M1507.5,105.2 V108.2 H1510.1" fill="none" stroke="#212121" stroke-width="1.1"/><path d="M1507.5,101.8 L1509.2,103.5 L1507.5,105.2 L1505.8,103.5 Z" fill="none" stroke="#212121" stroke-width="1"/><circle cx="1512.4" cy="108.3" r="2.3" fill="none" stroke="#212121" stroke-width="1.1"/>
<path d="M1524,102.5 L1528,106.5 L1532,102.5" fill="none" stroke="#212121" stroke-width="1.1"/>
<path d="M1550.2,108.2 L1556.3,102.1 Q1555.2,98.8 1557.6,97.6 Q1559.6,96.6 1561.4,97.3 L1559.4,99.6 L1561,101.2 L1563.2,99.2 Q1563.8,101.5 1562.4,103.2 Q1560.6,105 1557.9,103.7 L1551.8,109.8 Q1551,110.6 1550.2,109.8 Q1549.4,109 1550.2,108.2 Z" fill="none" stroke="#212121" stroke-width="1.1" stroke-linejoin="round"/>
<path d="M1574.2,106.9 H1576.4 V103.3 H1585 V106.9 H1576.4" fill="none" stroke="#212121" stroke-width="1.1"/><path d="M1584.4,98.1 V99.6 M1588.2,99.8 L1587.2,100.8 M1588.6,103.5 H1590" stroke="#d39400" stroke-width="1"/>
<circle cx="1647.5" cy="131" r="4.5" fill="none" stroke="#212121" stroke-width="1.2"/><path d="M1650.8,134.3 L1654,137.5" stroke="#212121" stroke-width="1.3"/>
<path d="M1664,131.0 L1668,135.0 L1672,131.0" fill="none" stroke="#212121" stroke-width="1.1"/>
<path d="M1351.5,156.0 V152.0 Q1351.5,150.5 1353.0,150.5 H1359.0 Q1360.5,150.5 1360.5,152.0 V161.5 Q1360.5,163.0 1359.0,163.0 H1356.5 M1351.5,153.5 H1360.5" fill="none" stroke="#212121" stroke-width="1.2"/>
<ellipse cx="1347.9" cy="161.0" rx="1.5" ry="2.2" fill="none" stroke="#7b3fe4" stroke-width="1.7"/><ellipse cx="1352.1" cy="161.0" rx="1.4" ry="3.0" fill="none" stroke="#7b3fe4" stroke-width="1.9"/>
<path d="M1351,172.2 V178.5 H1344.7 Z" fill="#212121"/>
<circle cx="1375" cy="176.0" r="5.6" fill="none" stroke="#1b6fd1" stroke-width="1.3"/><ellipse cx="1375" cy="176.0" rx="2.6" ry="5.6" fill="none" stroke="#1b6fd1" stroke-width="1.1"/><path d="M1370,172.8 H1380 M1370,179.0 H1380" stroke="#1b6fd1" stroke-width="1.1"/>
<rect x="1365.4" y="175.3" width="9.6" height="9.4" fill="#f5f5f5"/><rect x="1366" y="176.2" width="7.8" height="7.6" rx="1.3" fill="#212121"/><path d="M1366,178.1 H1373.8" stroke="#f5f5f5" stroke-width="1"/>
<path d="M1363.5,191.0 L1368,194.5 L1363.5,198.0 Z" fill="none" stroke="#212121" stroke-width="1.1" stroke-linejoin="round"/>
<path d="M1385.6,193.5 H1389.5 V197.5 H1385.6 Z M1391.5,192.5 H1396.5 V197.5 H1391.5 Z M1389.5,195.5 H1391.5 M1387.5,193.5 V191.5 Q1387.5,190.0 1389,190.0 H1390 M1393,190.5 H1398.5 V195.5" fill="none" stroke="#212121" stroke-width="1.1"/>
<path d="M1363.5,210.0 L1368,213.5 L1363.5,217.0 Z" fill="none" stroke="#212121" stroke-width="1.1" stroke-linejoin="round"/>
<path d="M1385.6,219.0 V210.0 Q1385.6,208.5 1387,208.5 H1390 L1392,210.5 H1397.5 Q1398.6,210.5 1398.6,211.5 V218.0 Q1398.6,219.1 1397.5,219.1 H1386.7 Q1385.6,219.1 1385.6,218.0 M1385.6,212.5 H1390 L1392,210.5" fill="none" stroke="#c4901b" stroke-width="1.25" stroke-linejoin="round"/>
<path d="M1369,229.2 V235.5 H1362.7 Z" fill="#212121"/>
<path d="M1385.6,238.0 V229.0 Q1385.6,227.5 1387,227.5 H1390 L1392,229.5 H1397.5 Q1398.6,229.5 1398.6,230.5 V237.0 Q1398.6,238.1 1397.5,238.1 H1386.7 Q1385.6,238.1 1385.6,237.0 M1385.6,231.5 H1390 L1392,229.5" fill="none" stroke="#c4901b" stroke-width="1.25" stroke-linejoin="round"/>
<path d="M1381.5,248.0 L1386,251.5 L1381.5,255.0 Z" fill="none" stroke="#212121" stroke-width="1.1" stroke-linejoin="round"/>
<path d="M1403.6,257.0 V248.0 Q1403.6,246.5 1405,246.5 H1408 L1410,248.5 H1415.5 Q1416.6,248.5 1416.6,249.5 V256.0 Q1416.6,257.1 1415.5,257.1 H1404.7 Q1403.6,257.1 1403.6,256.0 M1403.6,250.5 H1408 L1410,248.5" fill="none" stroke="#c4901b" stroke-width="1.25" stroke-linejoin="round"/>
<path d="M1387,267.2 V273.5 H1380.7 Z" fill="#212121"/>
<path d="M1403.6,276.0 V267.0 Q1403.6,265.5 1405,265.5 H1408 L1410,267.5 H1415.5 Q1416.6,267.5 1416.6,268.5 V275.0 Q1416.6,276.1 1415.5,276.1 H1404.7 Q1403.6,276.1 1403.6,275.0 M1403.6,269.5 H1408 L1410,267.5" fill="none" stroke="#c4901b" stroke-width="1.25" stroke-linejoin="round"/>
<path d="M1399.5,286.0 L1404,289.5 L1399.5,293.0 Z" fill="none" stroke="#212121" stroke-width="1.1" stroke-linejoin="round"/>
<path d="M1421.6,295.0 V286.0 Q1421.6,284.5 1423,284.5 H1426 L1428,286.5 H1433.5 Q1434.6,286.5 1434.6,287.5 V294.0 Q1434.6,295.1 1433.5,295.1 H1422.7 Q1421.6,295.1 1421.6,294.0 M1421.6,288.5 H1426 L1428,286.5" fill="none" stroke="#c4901b" stroke-width="1.25" stroke-linejoin="round"/>
<path d="M1428.4,315.5 H1432.1 Q1433.6,315.5 1433.6,314.0 V306.4 L1429.8,302.8 H1426.5 Q1424.6,302.8 1424.6,304.7 V307.7 M1429.6,303.0 V305.1 Q1429.6,306.3 1430.8,306.3 H1433.4" fill="none" stroke="#212121" stroke-width="1.15" stroke-linejoin="round"/>
<path d="M1420.8999999999999,311.9 L1422.1,309.2 L1423.3,311.9 Z M1420.8999999999999,313.1 L1422.1,315.9 L1423.3,313.1 Z M1423.3,311.9 L1424.5,309.2 L1425.7,311.9 Z M1423.3,313.1 L1424.5,315.9 L1425.7,313.1 Z M1425.7,311.9 L1426.9,309.2 L1428.1000000000001,311.9 Z M1425.7,313.1 L1426.9,315.9 L1428.1000000000001,313.1 Z " fill="#1f6fc5"/>
<path d="M1410.4,334.5 H1414.1 Q1415.6,334.5 1415.6,333.0 V325.4 L1411.8,321.8 H1408.5 Q1406.6,321.8 1406.6,323.7 V326.7 M1411.6,322.0 V324.1 Q1411.6,325.3 1412.8,325.3 H1415.4" fill="none" stroke="#212121" stroke-width="1.15" stroke-linejoin="round"/>
<path d="M1402.8999999999999,330.9 L1404.1,328.2 L1405.3,330.9 Z M1402.8999999999999,332.1 L1404.1,334.9 L1405.3,332.1 Z M1405.3,330.9 L1406.5,328.2 L1407.7,330.9 Z M1405.3,332.1 L1406.5,334.9 L1407.7,332.1 Z M1407.7,330.9 L1408.9,328.2 L1410.1000000000001,330.9 Z M1407.7,332.1 L1408.9,334.9 L1410.1000000000001,332.1 Z " fill="#1f6fc5"/>
<text x="1403.5" y="350.5" font-family="Liberation Sans" font-size="10.5" fill="#d9541a" letter-spacing="-0.2">JS</text>
<path d="M1387.6,361.7 Q1387.6,359.8 1389.5,359.8 H1392.8 L1396.6,363.4 V371.0 Q1396.6,372.5 1395.1,372.5 H1389.1 Q1387.6,372.5 1387.6,371.0 Z M1392.6,360.0 V362.1 Q1392.6,363.3 1393.8,363.3 H1396.4" fill="none" stroke="#212121" stroke-width="1.15" stroke-linejoin="round"/>
<path d="M1387.6,380.7 Q1387.6,378.8 1389.5,378.8 H1392.8 L1396.6,382.4 V390.0 Q1396.6,391.5 1395.1,391.5 H1389.1 Q1387.6,391.5 1387.6,390.0 Z M1392.6,379.0 V381.1 Q1392.6,382.3 1393.8,382.3 H1396.4" fill="none" stroke="#212121" stroke-width="1.15" stroke-linejoin="round"/>
<path d="M1387.6,399.7 Q1387.6,397.8 1389.5,397.8 H1392.8 L1396.6,401.4 V409.0 Q1396.6,410.5 1395.1,410.5 H1389.1 Q1387.6,410.5 1387.6,409.0 Z M1392.6,398.0 V400.1 Q1392.6,401.3 1393.8,401.3 H1396.4" fill="none" stroke="#212121" stroke-width="1.15" stroke-linejoin="round"/>
<path d="M1394.6000000000001,429.5 H1395.3 Q1396.8,429.5 1396.8,428.0 V420.4 L1393.0,416.8 H1389.7 Q1387.8,416.8 1387.8,418.7 V423.7 M1392.8,417.0 V419.1 Q1392.8,420.3 1394.0,420.3 H1396.6000000000001" fill="none" stroke="#212121" stroke-width="1.15" stroke-linejoin="round"/>
<path d="M1384.6,429.7 V425.3 L1386.6,427.7 L1388.6,425.3 V429.7" fill="none" stroke="#212121" stroke-width="1.15" stroke-linejoin="miter"/><path d="M1392.2,424.7 V429.3 M1390.2,427.3 L1392.2,429.3 L1394.2,427.3" fill="none" stroke="#212121" stroke-width="1.1"/><path d="M1394.2,429.5 H1395.4" stroke="#212121" stroke-width="1.15"/>
<text x="1385.5" y="445.5" font-family="Liberation Sans" font-size="10.5" fill="#d9541a" letter-spacing="-0.2">JS</text>
<path d="M1392.6,467.5 H1395.1 Q1396.6,467.5 1396.6,466.0 V458.4 L1392.8,454.8 H1389.5 Q1387.6,454.8 1387.6,456.7 V463.1 M1392.6,455.0 V457.1 Q1392.6,458.3 1393.8,458.3 H1396.4" fill="none" stroke="#212121" stroke-width="1.15" stroke-linejoin="round"/>
<path d="M1384.5,464.5 L1383,466.0 L1384.5,467.5 M1390.5,464.5 L1392,466.0 L1390.5,467.5" fill="none" stroke="#212121" stroke-width="0.9"/><circle cx="1387.5" cy="466.0" r="1.6" fill="#1b6fd1"/>
<path d="M1393.2,486.5 H1396.1 Q1397.6,486.5 1397.6,485.0 V477.4 L1393.8,473.8 H1390.5 Q1388.6,473.8 1388.6,475.7 V479.9 M1393.6,474.0 V476.1 Q1393.6,477.3 1394.8,477.3 H1397.4" fill="none" stroke="#212121" stroke-width="1.15" stroke-linejoin="round"/>
<path d="M1387.4,480.8 Q1386.0,480.8 1386.0,482.2 V483.0 L1384.9,483.8 L1386.0,484.6 V485.4 Q1386.0,486.8 1387.4,486.8 M1390.0,480.8 Q1391.4,480.8 1391.4,482.2 V483.0 L1392.5,483.8 L1391.4,484.6 V485.4 Q1391.4,486.8 1390.0,486.8" fill="none" stroke="#212121" stroke-width="1.1" stroke-linejoin="miter"/><path d="M1393,486.5 H1395" stroke="#212121" stroke-width="1.15"/>
<path d="M1363.5,495.0 L1368,498.5 L1363.5,502.0 Z" fill="none" stroke="#212121" stroke-width="1.1" stroke-linejoin="round"/>
<path d="M1393.2,505.5 H1396.1 Q1397.6,505.5 1397.6,504.0 V496.4 L1393.8,492.8 H1390.5 Q1388.6,492.8 1388.6,494.7 V498.9 M1393.6,493.0 V495.1 Q1393.6,496.3 1394.8,496.3 H1397.4" fill="none" stroke="#212121" stroke-width="1.15" stroke-linejoin="round"/>
<path d="M1387.4,499.8 Q1386.0,499.8 1386.0,501.2 V502.0 L1384.9,502.8 L1386.0,503.6 V504.4 Q1386.0,505.8 1387.4,505.8 M1390.0,499.8 Q1391.4,499.8 1391.4,501.2 V502.0 L1392.5,502.8 L1391.4,503.6 V504.4 Q1391.4,505.8 1390.0,505.8" fill="none" stroke="#212121" stroke-width="1.1" stroke-linejoin="miter"/><path d="M1393,505.5 H1395" stroke="#212121" stroke-width="1.15"/>
<path d="M1394.6000000000001,524.5 H1395.3 Q1396.8,524.5 1396.8,523.0 V515.4 L1393.0,511.8 H1389.7 Q1387.8,511.8 1387.8,513.7 V518.7 M1392.8,512.0 V514.1 Q1392.8,515.3 1394.0,515.3 H1396.6000000000001" fill="none" stroke="#212121" stroke-width="1.15" stroke-linejoin="round"/>
<path d="M1384.6,524.7 V520.3 L1386.6,522.7 L1388.6,520.3 V524.7" fill="none" stroke="#212121" stroke-width="1.15" stroke-linejoin="miter"/><path d="M1392.2,519.7 V524.3 M1390.2,522.3 L1392.2,524.3 L1394.2,522.3" fill="none" stroke="#212121" stroke-width="1.1"/><path d="M1394.2,524.5 H1395.4" stroke="#212121" stroke-width="1.15"/>
<path d="M1363.5,533.0 L1368,536.5 L1363.5,540.0 Z" fill="none" stroke="#212121" stroke-width="1.1" stroke-linejoin="round"/>
<path d="M1387.6,532.7 Q1387.6,530.8 1389.5,530.8 H1392.8 L1396.6,534.4 V542.0 Q1396.6,543.5 1395.1,543.5 H1389.1 Q1387.6,543.5 1387.6,542.0 Z M1392.6,531.0 V533.1 Q1392.6,534.3 1393.8,534.3 H1396.4" fill="none" stroke="#212121" stroke-width="1.15" stroke-linejoin="round"/>
<path d="M1389.5,542.0 L1392.5,535.5 L1393.5,542.0 M1390.5,540.0 H1393.3" fill="none" stroke="#d0202a" stroke-width="1.2"/>
<text x="1385.5" y="559.5" font-family="Liberation Sans" font-size="10.5" fill="#d9541a" letter-spacing="-0.2">JS</text>
<path d="M1363.5,571.0 L1368,574.5 L1363.5,578.0 Z" fill="none" stroke="#212121" stroke-width="1.1" stroke-linejoin="round"/>
<text x="1385.5" y="578.5" font-family="Liberation Sans" font-size="10.5" fill="#d9541a" letter-spacing="-0.2">JS</text>
<text x="1385.5" y="597.5" font-family="Liberation Sans" font-size="10.5" fill="#d9541a" letter-spacing="-0.2">JS</text>
<text x="1385.5" y="616.5" font-family="Liberation Sans" font-size="10.5" fill="#d9541a" letter-spacing="-0.2">JS</text>
<text x="1385.5" y="635.5" font-family="Liberation Sans" font-size="10.5" fill="#d9541a" letter-spacing="-0.2">JS</text>
<path d="M1351,647.2 V653.5 H1344.7 Z" fill="#212121"/>
<path d="M1368.6,649.5 V646.2 Q1368.6,644.8 1370,644.8 H1378.4 Q1379.8,644.8 1379.8,646.2 V654.9 Q1379.8,656.3 1378.4,656.3 H1375.6 M1368.6,647.1 H1379.8" fill="none" stroke="#212121" stroke-width="1.2"/>
<circle cx="1370.7" cy="654.1" r="5.6" fill="#f5f5f5"/>
<circle cx="1370.7" cy="654.1" r="4.3" fill="none" stroke="#1b6fd1" stroke-width="1.3"/><ellipse cx="1370.7" cy="654.1" rx="1.935" ry="4.3" fill="none" stroke="#1b6fd1" stroke-width="1.1700000000000002"/><path d="M1366.8300000000002,652.38 H1374.57 M1366.8300000000002,655.82 H1374.57" stroke="#1b6fd1" stroke-width="1.1700000000000002"/>
<path d="M1363.5,666.0 L1368,669.5 L1363.5,673.0 Z" fill="none" stroke="#212121" stroke-width="1.1" stroke-linejoin="round"/>
<path d="M1389.5,673.5 H1387.8 Q1385.3,673.5 1385.3,670.9 Q1385.3,668.3 1388,668.1 Q1388.8,664.1 1392.8,664.1 Q1396.8,664.1 1397.4,667.9 Q1399.3,668.2 1399.4,670.1" fill="none" stroke="#2f8fd8" stroke-width="1.15"/><path d="M1390.5,677.5 L1392.5,675.5 M1397.5,670.5 L1399.5,668.5" stroke="#1c9b94" stroke-width="1.2"/><circle cx="1393.6" cy="674.4" r="2.1" fill="#1c9b94"/><circle cx="1396.6" cy="671.4" r="2.1" fill="#1c9b94"/>
<path d="M1363.5,685.0 L1368,688.5 L1363.5,692.0 Z" fill="none" stroke="#212121" stroke-width="1.1" stroke-linejoin="round"/>
<path d="M1385.6,687.5 H1389.5 V691.5 H1385.6 Z M1391.5,686.5 H1396.5 V691.5 H1391.5 Z M1389.5,689.5 H1391.5 M1387.5,687.5 V685.5 Q1387.5,684.0 1389,684.0 H1390 M1393,684.5 H1398.5 V689.5" fill="none" stroke="#212121" stroke-width="1.1"/>
<path d="M1363.5,704.0 L1368,707.5 L1363.5,711.0 Z" fill="none" stroke="#212121" stroke-width="1.1" stroke-linejoin="round"/>
<path d="M1385.8,712.7 V703.7 Q1385.8,702.2 1387.2,702.2 H1390.2 L1392.2,704.2 H1397.7 Q1398.8,704.2 1398.8,705.2 V711.7 Q1398.8,712.8000000000001 1397.7,712.8000000000001 H1386.9 Q1385.8,712.8000000000001 1385.8,711.7 M1385.8,706.2 H1390.2 L1392.2,704.2" fill="none" stroke="#c4901b" stroke-width="1.25" stroke-linejoin="round"/>
<rect x="1383.5" y="707.3" width="8" height="9" fill="#f5f5f5"/>
<path d="M1386.2,706.9 Q1384,707.7 1384.4,709.9 Q1384.8,711.7 1386.8,711.9 L1391.6,716.7 Q1392.6,717.5 1393.4,716.7 Q1394.2,715.9 1393.4,714.9 L1388.6,710.1 Q1388.6,707.9 1386.4,706.9 L1387,709.3 L1385.8,710.3 Z" fill="#212121"/>
<path d="M1363.5,723.0 L1368,726.5 L1363.5,730.0 Z" fill="none" stroke="#212121" stroke-width="1.1" stroke-linejoin="round"/>
<circle cx="1392" cy="727.0" r="6" fill="none" stroke="#1b6fd1" stroke-width="1.2"/><ellipse cx="1392" cy="727.0" rx="2.7" ry="6" fill="none" stroke="#1b6fd1" stroke-width="1.08"/><path d="M1386.6,724.6 H1397.4 M1386.6,729.4 H1397.4" stroke="#1b6fd1" stroke-width="1.08"/>
<path d="M1363.5,742.0 L1368,745.5 L1363.5,749.0 Z" fill="none" stroke="#212121" stroke-width="1.1" stroke-linejoin="round"/>
<path d="M1385.6,751.0 V742.0 Q1385.6,740.5 1387,740.5 H1390 L1392,742.5 H1397.5 Q1398.6,742.5 1398.6,743.5 V750.0 Q1398.6,751.1 1397.5,751.1 H1386.7 Q1385.6,751.1 1385.6,750.0 M1385.6,744.5 H1390 L1392,742.5" fill="none" stroke="#c4901b" stroke-width="1.25" stroke-linejoin="round"/>
<path d="M1363.5,761.0 L1368,764.5 L1363.5,768.0 Z" fill="none" stroke="#212121" stroke-width="1.1" stroke-linejoin="round"/>
<path d="M1393.2,771.5 H1396.1 Q1397.6,771.5 1397.6,770.0 V762.4 L1393.8,758.8 H1390.5 Q1388.6,758.8 1388.6,760.7 V764.9 M1393.6,759.0 V761.1 Q1393.6,762.3 1394.8,762.3 H1397.4" fill="none" stroke="#212121" stroke-width="1.15" stroke-linejoin="round"/>
<path d="M1387.4,765.8 Q1386.0,765.8 1386.0,767.2 V768.0 L1384.9,768.8 L1386.0,769.6 V770.4 Q1386.0,771.8 1387.4,771.8 M1390.0,765.8 Q1391.4,765.8 1391.4,767.2 V768.0 L1392.5,768.8 L1391.4,769.6 V770.4 Q1391.4,771.8 1390.0,771.8" fill="none" stroke="#212121" stroke-width="1.1" stroke-linejoin="miter"/><path d="M1393,771.5 H1395" stroke="#212121" stroke-width="1.15"/>
<path d="M1394.6000000000001,790.5 H1395.3 Q1396.8,790.5 1396.8,789.0 V781.4 L1393.0,777.8 H1389.7 Q1387.8,777.8 1387.8,779.7 V784.7 M1392.8,778.0 V780.1 Q1392.8,781.3 1394.0,781.3 H1396.6000000000001" fill="none" stroke="#212121" stroke-width="1.15" stroke-linejoin="round"/>
<path d="M1384.6,790.7 V786.3 L1386.6,788.7 L1388.6,786.3 V790.7" fill="none" stroke="#212121" stroke-width="1.15" stroke-linejoin="miter"/><path d="M1392.2,785.7 V790.3 M1390.2,788.3 L1392.2,790.3 L1394.2,788.3" fill="none" stroke="#212121" stroke-width="1.1"/><path d="M1394.2,790.5 H1395.4" stroke="#212121" stroke-width="1.15"/>
<path d="M1363.5,799.0 L1368,802.5 L1363.5,806.0 Z" fill="none" stroke="#212121" stroke-width="1.1" stroke-linejoin="round"/>
<text x="1385" y="806.5" font-family="Liberation Sans" font-size="10.5" fill="#2f8a2f" stroke="#2f8a2f" stroke-width="0.25">C#</text></svg>
</body></html>
